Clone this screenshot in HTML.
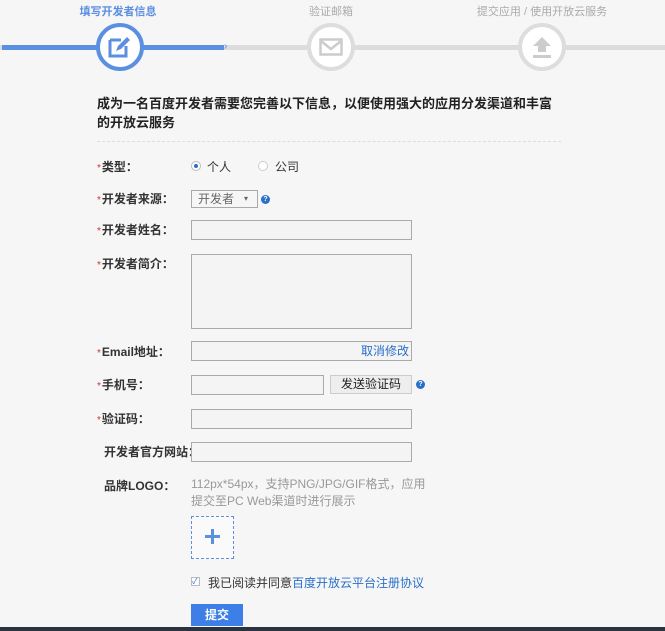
<!DOCTYPE html>
<html><head><meta charset="utf-8"><style>
*{margin:0;padding:0;box-sizing:border-box}
body{width:665px;height:631px;background:#f6f6f6;font-family:"Liberation Sans","Noto Sans CJK SC",sans-serif;font-size:12px;color:#333;position:relative;overflow:hidden}
.a{position:absolute}
.lbl{position:absolute;left:97px;font-weight:bold;font-size:12px;color:#333}
.lbl i{color:#c33;font-style:normal;font-weight:normal;font-size:10px;margin-right:1px}
.in{position:absolute;left:191px;border:1px solid #aaa;background:#f4f4f4;height:20px}
.q{position:absolute;width:9px;height:9px;border-radius:50%;background:#2a6fc9;color:#fff;font-size:7px;line-height:9px;text-align:center;font-weight:bold}
.circ{position:absolute;width:48px;height:48px;border-radius:50%;background:#fff;top:23px}
.step{position:absolute;top:3px;font-size:11px;color:#aaa;transform:translateX(-50%);white-space:nowrap}
</style></head><body>
<div class="step" style="left:118px;color:#5b8fe0;font-weight:bold">填写开发者信息</div>
<div class="step" style="left:331px">验证邮箱</div>
<div class="step" style="left:542px">提交应用 / 使用开放云服务</div>
<div class="a" style="left:0;top:45px;width:665px;height:5px;background:#dcdcdc"></div>
<div class="a" style="left:2px;top:45px;width:222px;height:5px;background:#5b8fe0"></div>
<div class="a" style="left:224px;top:41px;color:#5b8fe0;font-size:10px">›</div>
<div class="circ" style="left:96px;border:4px solid #5b8fe0"></div>
<svg class="a" style="left:106px;top:34px" width="28" height="26" viewBox="0 0 28 26"><path d="M4 6h11M4 6v16h16v-10" stroke="#5b8fe0" stroke-width="3" fill="none"/><path d="M10 17l2-5 9-9 3 3-9 9z" fill="#5b8fe0"/></svg>
<div class="circ" style="left:307px;border:4px solid #ddd"></div>
<svg class="a" style="left:319px;top:38px" width="24" height="18"><rect x="1.5" y="1.5" width="21" height="15" fill="none" stroke="#ccc" stroke-width="2.5"/><path d="M2 3l10 8 10-8" fill="none" stroke="#ccc" stroke-width="2.5"/></svg>
<div class="circ" style="left:518px;border:4px solid #ddd"></div>
<svg class="a" style="left:530px;top:34px" width="24" height="26"><path d="M12 3l9 9h-5v6h-8v-6h-5z" fill="#ccc"/><rect x="3" y="21" width="18" height="3" fill="#ccc"/></svg>
<div class="a" style="left:97px;top:94px;white-space:nowrap;font-weight:bold;font-size:13px;line-height:19px;color:#222">成为一名百度开发者需要您完善以下信息，以便使用强大的应用分发渠道和丰富<br>的开放云服务</div>
<div class="a" style="left:97px;top:141px;width:464px;border-top:1px dashed #ddd"></div>

<div class="lbl" style="top:158px"><i>*</i>类型：</div>
<div class="a" style="left:191px;top:161px;width:10px;height:10px;border:1px solid #bbb;border-radius:50%;background:#fff"></div>
<div class="a" style="left:194px;top:164px;width:4px;height:4px;border-radius:50%;background:#2a6fc9"></div>
<div class="a" style="left:207px;top:158px">个人</div>
<div class="a" style="left:258px;top:161px;width:10px;height:10px;border:1px solid #ccc;border-radius:50%;background:#fff"></div>
<div class="a" style="left:275px;top:158px">公司</div>

<div class="lbl" style="top:190px"><i>*</i>开发者来源：</div>
<div class="in" style="top:190px;width:67px;height:18px;color:#666;padding-left:6px;line-height:16px;background:#f6f6f6">开发者<span style="position:absolute;left:52px;font-size:8px">▾</span></div>
<div class="q" style="left:261px;top:195px">?</div>

<div class="lbl" style="top:221px"><i>*</i>开发者姓名：</div>
<div class="in" style="top:220px;width:221px"></div>
<div class="lbl" style="top:255px"><i>*</i>开发者简介：</div>
<div class="in" style="top:254px;width:221px;height:75px"></div>
<div class="lbl" style="top:343px"><i>*</i>Email地址：</div>
<div class="in" style="top:341px;width:221px;text-align:right;color:#2a6fc9;line-height:18px;padding-right:2px">取消修改</div>
<div class="lbl" style="top:376px"><i>*</i>手机号：</div>
<div class="in" style="top:375px;width:133px"></div>
<div class="in" style="left:330px;top:375px;width:82px;height:19px;background:#eee;border-color:#ccc;text-align:center;line-height:17px;color:#222">发送验证码</div>
<div class="q" style="left:416px;top:380px">?</div>
<div class="lbl" style="top:410px"><i>*</i>验证码：</div>
<div class="in" style="top:409px;width:221px"></div>
<div class="lbl" style="top:443px;left:104px">开发者官方网站：</div>
<div class="in" style="top:442px;width:221px"></div>
<div class="lbl" style="top:477px;left:104px">品牌LOGO：</div>
<div class="a" style="left:191px;top:476px;width:235px;color:#999;line-height:17px">112px*54px，支持PNG/JPG/GIF格式，应用提交至PC Web渠道时进行展示</div>
<div class="a" style="left:191px;top:516px;width:43px;height:43px;border:1px dashed #5b8fe0;background:#fafafa"></div>
<div class="a" style="left:205px;top:535px;width:15px;height:3px;background:#5b8fe0"></div>
<div class="a" style="left:211px;top:529px;width:3px;height:15px;background:#5b8fe0"></div>
<div class="a" style="left:191px;top:577px;width:9px;height:9px;border:1px solid #bbb;background:#fff;font-size:8px;line-height:7px;color:#2a6fc9">✓</div>
<div class="a" style="left:208px;top:574px">我已阅读并同意<span style="color:#2a6fc9">百度开放云平台注册协议</span></div>
<div class="a" style="left:191px;top:604px;width:52px;height:22px;background:#3d7fe6;color:#fff;font-weight:bold;text-align:center;line-height:22px;font-size:12px">提交</div>
<div class="a" style="left:0;top:627px;width:665px;height:4px;background:#2b3340"></div>
</body></html>
